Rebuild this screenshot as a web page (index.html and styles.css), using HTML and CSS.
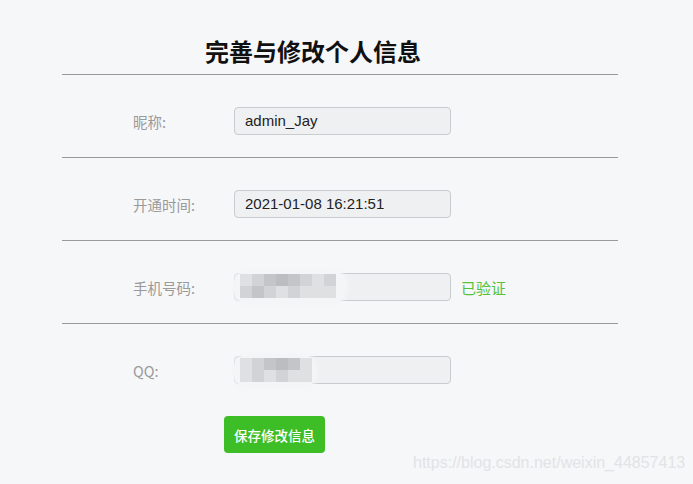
FILE: index.html
```html
<!DOCTYPE html>
<html lang="zh">
<head>
<meta charset="utf-8">
<title>完善与修改个人信息</title>
<link rel="stylesheet" href="styles.css">
</head>
<body>
<div class="page">
  <h1 class="title">完善与修改个人信息</h1>
  <div class="form">
    <div class="row">
      <span class="label">昵称:</span>
      <div class="field"><div class="input">admin_Jay</div></div>
    </div>
    <div class="row">
      <span class="label">开通时间:</span>
      <div class="field"><div class="input">2021-01-08 16:21:51</div></div>
    </div>
    <div class="row">
      <span class="label">手机号码:</span>
      <div class="field">
        <div class="input"></div>
        <div class="mosaic mosaic-phone">
          <i class="c1"></i><i class="c2"></i><i class="c3"></i><i class="c4"></i><i class="c3"></i><i class="c2"></i><i class="c1"></i><i class="c2"></i>
          <i class="c2"></i><i class="c3"></i><i class="c2"></i><i class="c1"></i><i class="c2"></i><i class="c1"></i><i class="c1"></i><i class="c1"></i>
        </div>
      </div>
      <span class="verified">已验证</span>
    </div>
    <div class="row last">
      <span class="label">QQ:</span>
      <div class="field">
        <div class="input"></div>
        <div class="mosaic mosaic-qq">
          <i class="c1"></i><i class="c2"></i><i class="c3"></i><i class="c4"></i><i class="c3"></i><i class="c1"></i>
          <i class="c1"></i><i class="c2"></i><i class="c1"></i><i class="c2"></i><i class="c1"></i><i class="c1"></i>
        </div>
      </div>
    </div>
    <div class="actions">
      <button class="save">保存修改信息</button>
    </div>
  </div>
</div>
<div class="watermark">https://blog.csdn.net/weixin_44857413</div>
</body>
</html>
```

FILE: styles.css
```css
html, body {
  margin: 0;
  padding: 0;
}
body {
  background: #f6f7f9;
  width: 693px;
  height: 484px;
  overflow: hidden;
  font-family: "Liberation Sans", "Noto Sans CJK SC", Arial, sans-serif;
  position: relative;
}
.page {
  margin-left: 62px;
  width: 556px;
}
.title {
  margin: 0;
  box-sizing: border-box;
  height: 75px;
  padding: 39px 0 0 143px;
  font-family: "Noto Sans CJK SC", sans-serif;
  font-size: 24px;
  font-weight: 700;
  line-height: 1;
  color: #111;
  letter-spacing: 0;
  border-bottom: 1px solid #9a9a9a;
}
.row {
  display: flex;
  align-items: center;
  height: 83px;
  box-sizing: border-box;
  padding: 32px 0 22px;
  border-bottom: 1px solid #9a9a9a;
}
.row.last {
  height: 60px;
  padding-bottom: 0;
  border-bottom: none;
}
.label {
  width: 172px;
  box-sizing: border-box;
  padding-left: 71px;
  font-family: "Noto Sans CJK SC", sans-serif;
  font-size: 14.5px;
  color: #9a9a9a;
  flex: none;
}
.field {
  position: relative;
  width: 217px;
  height: 28px;
  flex: none;
}
.input {
  width: 217px;
  height: 28px;
  box-sizing: border-box;
  background: #eef0f2;
  border: 1px solid #c9cbce;
  border-radius: 4px;
  padding-left: 10px;
  font-size: 15px;
  line-height: 26px;
  color: #222;
}
.verified {
  margin-left: 10px;
  font-family: "Noto Sans CJK SC", sans-serif;
  font-size: 15px;
  color: #56c23a;
}
.mosaic {
  position: absolute;
  display: grid;
  grid-template-columns: repeat(var(--cols), 12px);
  grid-auto-rows: 12px;
  background: #f4f5f7;
  border-radius: 14px;
  box-shadow: 0 0 4px 2px #f4f5f7;
}
.mosaic i {
  display: block;
}
.mosaic-phone {
  --cols: 8;
  left: 0;
  top: -2px;
  padding: 3px 10px 5px 6px;
}
.mosaic-qq {
  --cols: 6;
  left: 0;
  top: -1px;
  padding: 3px 4px 5px 6px;
}
.c1 { background: #dfe0e2; }
.c2 { background: #d2d3d6; }
.c3 { background: #c4c5c8; }
.c4 { background: #bcbdc0; }
.actions {
  padding: 32px 0 0 162px;
}
.save {
  display: block;
  width: 101px;
  height: 37px;
  border: none;
  border-radius: 4px;
  background: #3dbd26;
  color: #fff;
  font-family: "Noto Sans CJK SC", sans-serif;
  font-size: 13.5px;
  font-weight: 500;
  padding: 0;
}
.watermark {
  position: absolute;
  left: 413px;
  top: 454px;
  font-size: 16px;
  color: #e2e3e5;
  white-space: nowrap;
}
```
